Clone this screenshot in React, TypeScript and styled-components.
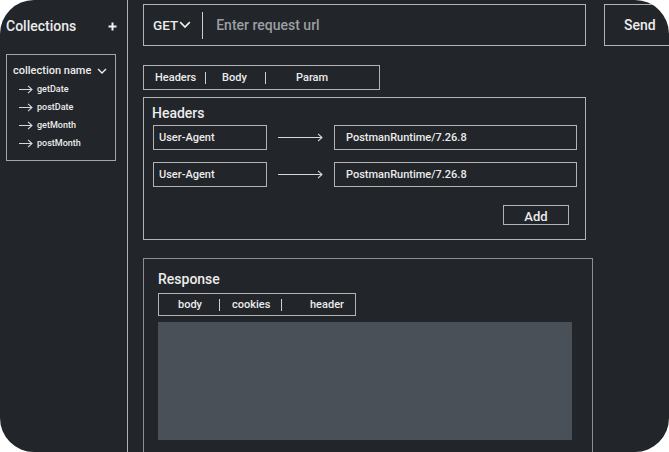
import React from "react";
import styled, { createGlobalStyle } from "styled-components";

const GlobalStyle = createGlobalStyle`
  html, body { margin: 0; padding: 0; background: #ffffff; }
  * { box-sizing: border-box; }
`;

const LINE = "#b3b3b3";
const TEXT = "#ececec";

const Frame = styled.div`
  width: 669px;
  height: 452px;
  border-radius: 34px;
  overflow: hidden;
  background: #222529;
  display: flex;
  font-family: Roboto, "Liberation Sans", sans-serif;
  color: ${TEXT};
`;

const Sidebar = styled.aside`
  width: 128px;
  flex: none;
  border-right: 1px solid ${LINE};
  display: flex;
  flex-direction: column;
`;

const SidebarHeader = styled.div`
  display: flex;
  align-items: center;
  justify-content: space-between;
  padding: 17px 10px 0 6px;
  height: 35px;
  font-size: 14px;
  font-weight: 500;
  line-height: 18px;
`;

const PlusIcon = () => (
  <svg width="9" height="9" viewBox="0 0 9 9">
    <path d="M4.5 0.5v8M0.5 4.5h8" stroke="#f2f2f2" strokeWidth="2" />
  </svg>
);

const CollectionBox = styled.div`
  margin: 19px 11px 0 6px;
  border: 1px solid #a6a6a6;
  padding: 9px 0 8px 0;
  display: flex;
  flex-direction: column;
`;

const CollectionName = styled.div`
  display: flex;
  align-items: center;
  gap: 6px;
  padding-left: 6px;
  font-size: 11px;
  font-weight: 500;
  line-height: 14px;
  margin-bottom: 2px;
`;

const RequestItem = styled.div`
  display: flex;
  align-items: center;
  gap: 4px;
  padding-left: 12px;
  height: 18px;
  font-size: 9px;
  font-weight: 500;
`;

const Chevron = ({ w = 10 }: { w?: number }) => (
  <svg width={w} height={w * 0.6} viewBox="0 0 10 6">
    <path d="M1 1l4 4 4-4" fill="none" stroke="#eeeeee" strokeWidth="1.4" />
  </svg>
);

const Arrow = ({ w }: { w: number }) => (
  <svg width={w} height="9" viewBox={`0 0 ${w} 9`}>
    <path
      d={`M0 4.5H${w - 1}M${w - 5} 0.8L${w - 1} 4.5L${w - 5} 8.2`}
      fill="none"
      stroke="#d8d8d8"
      strokeWidth="1.1"
    />
  </svg>
);

const Main = styled.main`
  flex: 1;
  padding: 4px 0 0 15px;
  display: flex;
  flex-direction: column;
  min-width: 0;
`;

const TopRow = styled.div`
  display: flex;
  gap: 18px;
`;

const UrlBar = styled.div`
  width: 443px;
  height: 42px;
  flex: none;
  border: 1px solid ${LINE};
  display: flex;
  align-items: center;
  padding-left: 9px;
`;

const Method = styled.div`
  display: flex;
  align-items: center;
  gap: 1px;
  font-size: 13.5px;
  font-weight: 500;
  padding-right: 11px;
  height: 27px;
  border-right: 1px solid #cfcfcf;
`;

const UrlPlaceholder = styled.div`
  margin-left: 13px;
  font-size: 14px;
  font-weight: 500;
  color: #9b9fa4;
`;

const SendButton = styled.div`
  width: 72px;
  height: 42px;
  flex: none;
  border: 1px solid ${LINE};
  display: flex;
  align-items: center;
  padding-left: 19px;
  font-size: 14px;
  font-weight: 500;
`;

const TabBar = styled.div<{ $w: number; $h: number; $mt: number }>`
  width: ${(p) => p.$w}px;
  height: ${(p) => p.$h}px;
  margin-top: ${(p) => p.$mt}px;
  flex: none;
  border: 1px solid ${LINE};
  display: flex;
  align-items: center;
  font-size: 11px;
  font-weight: 500;
`;

const Tab = styled.div<{ $w: number; $pl: number }>`
  width: ${(p) => p.$w}px;
  padding-left: ${(p) => p.$pl}px;
  white-space: nowrap;
`;

const TabDivider = styled.div`
  width: 1px;
  height: 12px;
  background: #cfcfcf;
`;

const Panel = styled.section`
  width: 443px;
  height: 143px;
  flex: none;
  margin-top: 7px;
  border: 1px solid ${LINE};
  padding: 6px 0 0 8px;
  display: flex;
  flex-direction: column;
`;

const PanelTitle = styled.div`
  font-size: 14px;
  font-weight: 500;
  line-height: 18px;
`;

const HeaderRows = styled.div`
  margin-top: 3px;
  padding-left: 1px;
  display: flex;
  flex-direction: column;
  gap: 12px;
`;

const HeaderRow = styled.div`
  display: flex;
  align-items: center;
  gap: 11px;
`;

const Field = styled.div<{ $w: number; $pl: number }>`
  width: ${(p) => p.$w}px;
  height: 25px;
  border: 1px solid ${LINE};
  display: flex;
  align-items: center;
  padding-left: ${(p) => p.$pl}px;
  font-size: 11px;
  font-weight: 500;
`;

const AddButton = styled.div`
  align-self: flex-end;
  margin: 18px 16px 0 0;
  width: 66px;
  height: 20px;
  border: 1px solid ${LINE};
  display: flex;
  align-items: center;
  justify-content: center;
  padding-top: 2px;
  font-size: 13px;
  font-weight: 500;
`;

const ResponsePanel = styled.section`
  width: 450px;
  flex: 1;
  margin-top: 18px;
  border: 1px solid #8e8e8e;
  border-bottom: none;
  padding: 11px 0 0 14px;
  display: flex;
  flex-direction: column;
`;

const ResponseBody = styled.div`
  width: 414px;
  height: 118px;
  margin-top: 6px;
  background: #4a5058;
`;

export default function App() {
  const requests = ["getDate", "postDate", "getMonth", "postMonth"];
  return (
    <>
      <GlobalStyle />
      <Frame>
        <Sidebar>
          <SidebarHeader>
            <span>Collections</span>
            <PlusIcon />
          </SidebarHeader>
          <CollectionBox>
            <CollectionName>
              <span>collection name</span>
              <Chevron w={10} />
            </CollectionName>
            {requests.map((r) => (
              <RequestItem key={r}>
                <Arrow w={14} />
                <span>{r}</span>
              </RequestItem>
            ))}
          </CollectionBox>
        </Sidebar>
        <Main>
          <TopRow>
            <UrlBar>
              <Method>
                <span>GET</span>
                <Chevron w={12} />
              </Method>
              <UrlPlaceholder>Enter request url</UrlPlaceholder>
            </UrlBar>
            <SendButton>Send</SendButton>
          </TopRow>
          <TabBar $w={237} $h={25} $mt={19}>
            <Tab $w={61} $pl={11}>Headers</Tab>
            <TabDivider />
            <Tab $w={59} $pl={16}>Body</Tab>
            <TabDivider />
            <Tab $w={90} $pl={30}>Param</Tab>
          </TabBar>
          <Panel>
            <PanelTitle>Headers</PanelTitle>
            <HeaderRows>
              {[0, 1].map((i) => (
                <HeaderRow key={i}>
                  <Field $w={114} $pl={5}>User-Agent</Field>
                  <Arrow w={45} />
                  <Field $w={243} $pl={11}>PostmanRuntime/7.26.8</Field>
                </HeaderRow>
              ))}
            </HeaderRows>
            <AddButton>Add</AddButton>
          </Panel>
          <ResponsePanel>
            <PanelTitle>Response</PanelTitle>
            <TabBar $w={198} $h={23} $mt={5}>
              <Tab $w={60} $pl={19}>body</Tab>
              <TabDivider />
              <Tab $w={61} $pl={12}>cookies</Tab>
              <TabDivider />
              <Tab $w={70} $pl={28}>header</Tab>
            </TabBar>
            <ResponseBody />
          </ResponsePanel>
        </Main>
      </Frame>
    </>
  );
}
